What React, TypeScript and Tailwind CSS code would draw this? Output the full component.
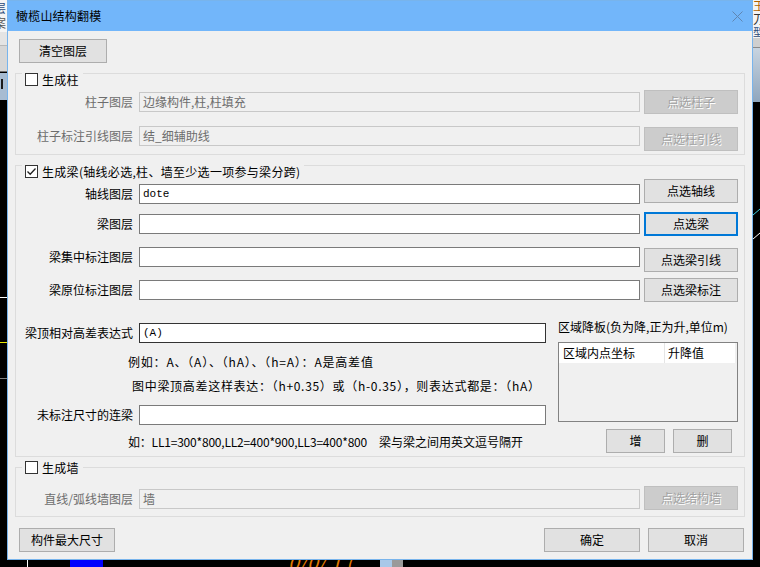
import React from "react";

function Btn({
  label,
  className = "",
  disabled = false,
  focused = false,
}: {
  label: string;
  className?: string;
  disabled?: boolean;
  focused?: boolean;
}) {
  const look = disabled
    ? "bg-[#cccccc] border border-[#bfbfbf] text-[#a3a3a3] [text-shadow:1px_1px_0_#ffffff]"
    : focused
    ? "bg-[#e1e1e1] border-2 border-[#0078d7] text-black"
    : "bg-[#e1e1e1] border border-[#adadad] text-black";
  return (
    <div className={`flex items-center justify-center h-6 text-[12px] leading-none shrink-0 ${look} ${className}`}>
      {label}
    </div>
  );
}

function Check({ checked = false }: { checked?: boolean }) {
  return (
    <div className="w-[13px] h-[13px] border border-[#333333] bg-white flex items-center justify-center shrink-0">
      {checked && (
        <svg width="11" height="11" viewBox="0 0 11 11">
          <path d="M1.5 5.5 L4.2 8.3 L9.5 2.5" fill="none" stroke="#222222" strokeWidth="1.3" />
        </svg>
      )}
    </div>
  );
}

function Legend({ label, checked = false, top }: { label: string; checked?: boolean; top: string }) {
  return (
    <div className={`absolute left-[6px] ${top} flex items-center h-[13px] pl-[3px] pr-[4px] bg-[#f0f0f0]`}>
      <Check checked={checked} />
      <span className="ml-[4px] text-[12px] leading-none text-black whitespace-nowrap tracking-[0.3px]">{label}</span>
    </div>
  );
}

export default function App() {
  return (
    <div className="relative w-[760px] h-[567px] bg-black overflow-hidden font-['Noto_Sans_CJK_SC','Noto_Sans',sans-serif]">
      {/* background app behind dialog - left strip */}
      <div className="absolute left-0 top-0 w-[7px] h-[32px] bg-[#f4f4f4]" />
      <div className="absolute left-0 top-[2px] w-[7px] h-[12px] overflow-hidden">
        <span className="block ml-[-6px] text-[12px] leading-[12px] text-[#2a4a7a]">层</span>
      </div>
      <div className="absolute left-0 top-[17px] w-[7px] h-[12px] overflow-hidden">
        <span className="block ml-[-6px] text-[12px] leading-[12px] text-[#555555]">案</span>
      </div>
      <div className="absolute left-0 top-[32px] w-[7px] h-[14px] bg-[#e4e4e4] border-b border-[#b8b8b8]" />
      <div className="absolute left-0 top-[46px] w-[7px] h-[26px] bg-[#d6d6d6] border-b border-[#707070]" />
      <div className="absolute left-0 top-[73px] w-[7px] h-[27px] bg-[#a7bcd2]" />
      <div className="absolute left-[1px] top-[79px] w-[2px] h-[10px] bg-[#1a1a1a]" />
      <div className="absolute left-0 top-[297px] w-[7px] h-px bg-white" />
      <div className="absolute left-0 top-[342px] w-[7px] h-px bg-[#e8e800]" />
      <div className="absolute left-0 top-[378px] w-[7px] h-px bg-[#808080]" />

      {/* right strip */}
      <div className="absolute left-[753px] top-0 w-[7px] h-[38px] bg-[#f4f4f4]" />
      <div className="absolute left-[753px] top-[0px] w-[7px] h-[12px] overflow-hidden">
        <span className="block text-[12px] leading-[12px] text-[#b06000]">王</span>
      </div>
      <div className="absolute left-[753px] top-[13px] w-[7px] h-[12px] overflow-hidden">
        <span className="block text-[12px] leading-[12px] text-[#333333]">刀</span>
      </div>
      <div className="absolute left-[753px] top-[27px] w-[7px] h-[10px] overflow-hidden">
        <span className="block text-[10px] leading-[10px] text-[#2a4a7a]">型</span>
      </div>
      <div className="absolute left-[753px] top-[38px] w-[7px] h-[10px] bg-[#cfcfcf] border-b border-[#8a8a8a]" />
      <div className="absolute left-[753px] top-[48px] w-[7px] h-[54px] bg-gradient-to-b from-[#c8d4e0] to-[#8fa6bd]" />
      <svg className="absolute left-[753px] top-[205px]" width="7" height="40" viewBox="0 0 7 40">
        <path d="M0 10 L7 4" stroke="#40d0e0" strokeWidth="1" />
        <path d="M0 34 L7 28" stroke="#ffffff" strokeWidth="1" />
      </svg>

      {/* bottom strip */}
      <div className="absolute left-[27px] top-[559px] w-px h-[8px] bg-white" />
      <div className="absolute left-[70px] top-[559px] w-[33px] h-[8px] bg-[#0000ff]" />
      <div className="absolute left-[288px] top-[552px] text-[20px] leading-none text-[#e07a00] italic whitespace-nowrap">
        0/0/ 1 (
      </div>
      <div className="absolute left-[380px] top-[559px] w-[12px] h-[8px] bg-[#a8c8e8]" />
      <div className="absolute left-[392px] top-[559px] w-[11px] h-[8px] bg-[#9a9a9a]" />

      {/* dialog window */}
      <div className="absolute left-[7px] top-0 w-[746px] h-[560px] border border-[#78b4ec] bg-[#f0f0f0] flex flex-col">
        {/* title bar */}
        <div className="h-[30px] bg-[#72b6fa] flex items-center pl-[8px] pr-[9px] shrink-0">
          <span className="text-[12px] leading-none text-black tracking-[0.2px]">橄榄山结构翻模</span>
          <svg className="ml-auto" width="11" height="11" viewBox="0 0 11 11">
            <path d="M0.5 0.5 L10.5 10.5 M10.5 0.5 L0.5 10.5" stroke="#5f86b3" strokeWidth="1" />
          </svg>
        </div>

        {/* body */}
        <div className="flex flex-col px-[7px] pt-[8px] text-[12px] text-black">
          <Btn label="清空图层" className="ml-[4px] w-[88px]" />

          {/* group 1 */}
          <div className="relative mt-[10px] h-[82px] border border-[#dcdcdc] pt-[16px] flex flex-col">
            <Legend label="生成柱" top="top-[-1px]" />
            <div className="flex items-center h-6">
              <div className="w-[117px] text-right text-[#6d6d6d] leading-none">柱子图层</div>
              <div className="ml-[6px] w-[501px] h-5 border border-[#c8c8c8] bg-[#f0f0f0] flex items-center pl-[3px] text-[#6d6d6d] leading-none">
                边缘构件,柱,柱填充
              </div>
              <Btn label="点选柱子" disabled className="ml-[4px] w-[94px]" />
            </div>
            <div className="flex items-start h-[25px] mt-[12px]">
              <div className="w-[117px] h-5 flex items-center justify-end text-[#6d6d6d] leading-none">柱子标注引线图层</div>
              <div className="ml-[6px] w-[501px] h-5 border border-[#c8c8c8] bg-[#f0f0f0] flex items-center pl-[3px] text-[#6d6d6d] leading-none">
                结_细辅助线
              </div>
              <Btn label="点选柱引线" disabled className="ml-[4px] mt-[1px] w-[94px]" />
            </div>
          </div>

          {/* group 2 */}
          <div className="relative mt-[10px] h-[292px] border border-[#dcdcdc] pt-[13px] flex flex-col">
            <Legend label="生成梁(轴线必选,柱、墙至少选一项参与梁分跨)" checked top="top-[-1px]" />
            <div className="flex items-start h-[25px]">
              <div className="w-[117px] h-5 mt-[5px] flex items-center justify-end leading-none">轴线图层</div>
              <div className="ml-[6px] mt-[5px] w-[501px] h-5 border border-[#7a7a7a] bg-white flex items-center pl-[3px] font-['Liberation_Mono',monospace] text-[11px] leading-none">
                dote
              </div>
              <Btn label="点选轴线" className="ml-[4px] w-[94px]" />
            </div>
            <div className="flex items-center h-6 mt-[8px]">
              <div className="w-[117px] text-right leading-none">梁图层</div>
              <div className="ml-[6px] w-[501px] h-5 border border-[#7a7a7a] bg-white" />
              <Btn label="点选梁" focused className="ml-[4px] w-[94px]" />
            </div>
            <div className="flex items-start h-[25px] mt-[11px]">
              <div className="w-[117px] h-5 flex items-center justify-end leading-none">梁集中标注图层</div>
              <div className="ml-[6px] w-[501px] h-5 border border-[#7a7a7a] bg-white" />
              <Btn label="点选梁引线" className="ml-[4px] mt-[1px] w-[94px]" />
            </div>
            <div className="flex items-start h-6 mt-[6px]">
              <div className="w-[117px] h-5 mt-[2px] flex items-center justify-end leading-none">梁原位标注图层</div>
              <div className="ml-[6px] mt-[2px] w-[501px] h-5 border border-[#7a7a7a] bg-white" />
              <Btn label="点选梁标注" className="ml-[4px] w-[94px]" />
            </div>

            <div className="flex mt-[16px]">
              {/* left column */}
              <div className="w-[530px] flex flex-col">
                <div className="flex items-center h-5 mt-[5px]">
                  <div className="w-[117px] text-right leading-none whitespace-nowrap">梁顶相对高差表达式</div>
                  <div className="ml-[6px] w-[407px] h-5 border border-[#333333] bg-white flex items-center pl-[3px] font-['Liberation_Mono',monospace] text-[11px] leading-none">
                    (A)
                  </div>
                </div>
                <div className="mt-[11px] h-4 ml-[112px] leading-4 whitespace-nowrap tracking-[0.8px]">
                  例如：A、（A）、（hA）、（h=A）：A是高差值
                </div>
                <div className="mt-[8px] h-4 ml-[116px] leading-4 whitespace-nowrap tracking-[0.7px]">
                  图中梁顶高差这样表达：（h+0.35）或（h-0.35），则表达式都是：（hA）
                </div>
                <div className="flex items-center h-5 mt-[11px]">
                  <div className="w-[117px] text-right leading-none whitespace-nowrap">未标注尺寸的连梁</div>
                  <div className="ml-[6px] w-[407px] h-5 border border-[#7a7a7a] bg-white" />
                </div>
                <div className="mt-[9px] h-4 ml-[112px] leading-4 whitespace-nowrap flex">
                  <span className="tracking-[-0.2px]">如：LL1=300*800,LL2=400*900,LL3=400*800</span>
                  <span className="ml-[12px]">梁与梁之间用英文逗号隔开</span>
                </div>
              </div>

              {/* right column */}
              <div className="ml-[12px] w-[180px] flex flex-col">
                <div className="mt-[1px] h-4 leading-4 whitespace-nowrap">区域降板(负为降,正为升,单位m)</div>
                <div className="mt-[7px] h-[80px] border border-[#828282] bg-[#f0f0f0] flex flex-col">
                  <div className="h-[20px] bg-white flex items-center mr-[2px]">
                    <div className="w-[106px] h-full flex items-center pl-[4px] border-r border-[#e5e5e5] leading-none">区域内点坐标</div>
                    <div className="pl-[3px] leading-none">升降值</div>
                  </div>
                </div>
                <div className="mt-[7px] flex">
                  <Btn label="增" className="ml-[48px] w-[59px]" />
                  <Btn label="删" className="ml-[8px] w-[59px]" />
                </div>
              </div>
            </div>
          </div>

          {/* group 3 */}
          <div className="relative mt-[10px] h-[50px] border border-[#dcdcdc] pt-[18px] flex flex-col">
            <Legend label="生成墙" top="top-[-7px]" />
            <div className="flex items-start h-[25px]">
              <div className="w-[117px] h-5 mt-[3px] flex items-center justify-end text-[#6d6d6d] leading-none">直线/弧线墙图层</div>
              <div className="ml-[6px] mt-[3px] w-[501px] h-5 border border-[#c8c8c8] bg-[#f0f0f0] flex items-center pl-[3px] text-[#6d6d6d] leading-none">
                墙
              </div>
              <Btn label="点选结构墙" disabled className="ml-[4px] w-[94px]" />
            </div>
          </div>

          {/* bottom buttons */}
          <div className="flex mt-[11px] h-6">
            <Btn label="构件最大尺寸" className="ml-[4px] w-[96px]" />
            <Btn label="确定" className="ml-auto w-[96px]" />
            <Btn label="取消" className="ml-[8px] mr-[1px] w-[96px]" />
          </div>
        </div>
      </div>
    </div>
  );
}
